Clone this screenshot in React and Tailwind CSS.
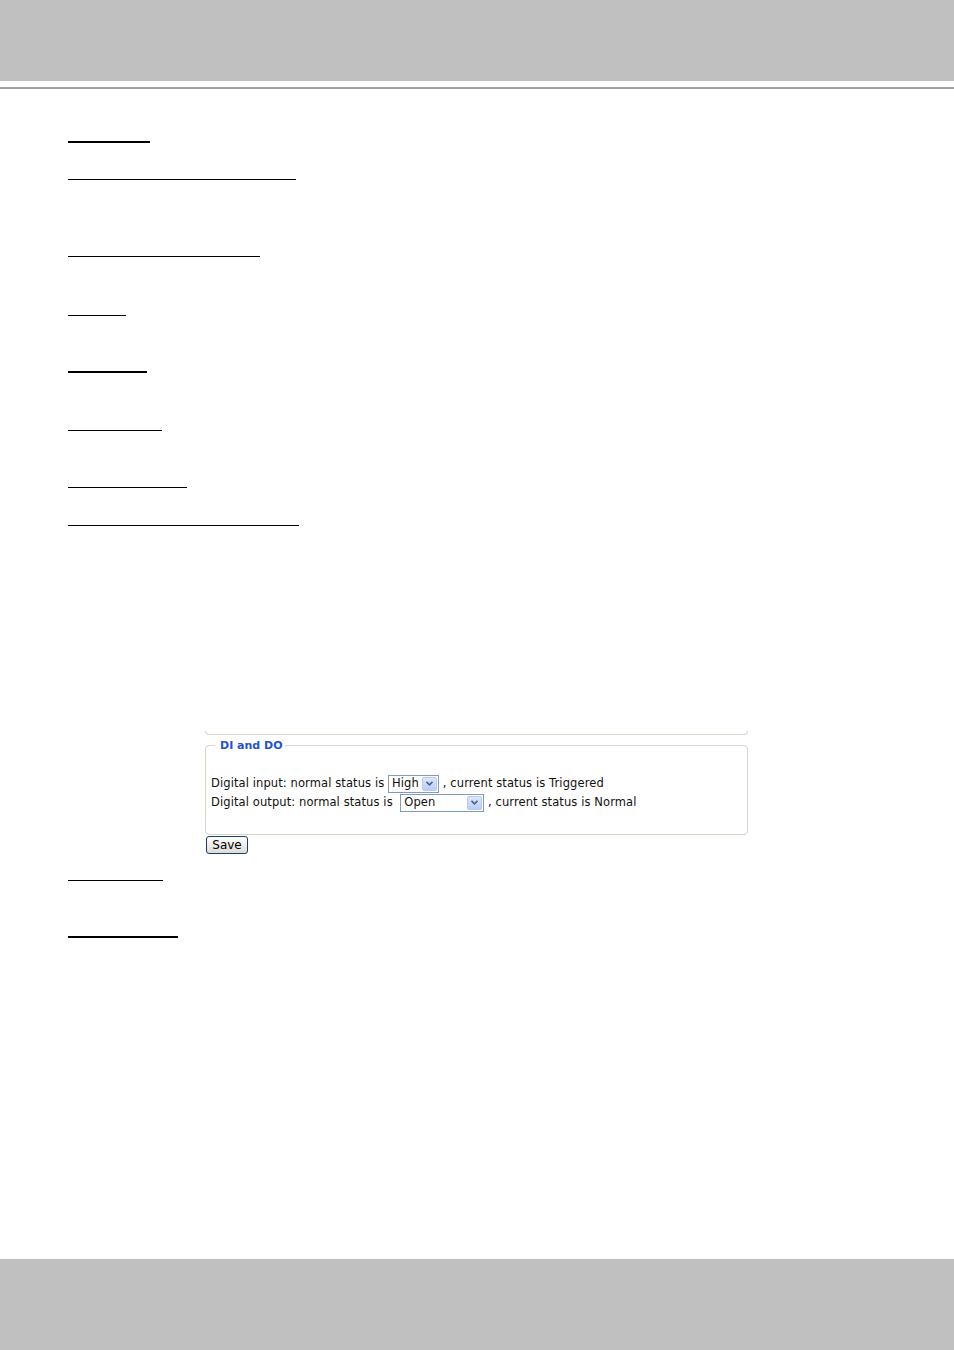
import React from 'react';

function Rule({ top, width, thick }) {
  return <div className={thick ? 'h-[2px] bg-black' : 'h-px bg-black'} style={{ marginTop: top, width }} />;
}

function FakeSelect({ value, width }) {
  return (
    <span
      className="inline-flex h-[18px] items-center justify-between border border-[#7f9db9] bg-white pl-[3px] pr-px"
      style={{ width }}
    >
      <span className="leading-none">{value}</span>
      <span className="flex h-[14px] w-[15px] items-center justify-center rounded-[2px] border border-[#b9c9ef] bg-linear-to-b from-[#dce6fd] to-[#b9cdfa]">
        <svg width="7" height="5" viewBox="0 0 7 5">
          <path d="M0.5 0.8 L3.5 3.8 L6.5 0.8" fill="none" stroke="#4d6185" strokeWidth="1.6" />
        </svg>
      </span>
    </span>
  );
}

export default function App() {
  return (
    <div className="flex h-[1350px] w-full flex-col bg-white font-['DejaVu_Sans',sans-serif]">
      {/* header band */}
      <div className="h-[81px] bg-[#bfc0bf]" />
      <div className="mt-[6px] h-[2px] bg-[#a0a0a0]" />

      <div className="flex-1 pl-[68px]">
        <Rule top={52} width={82} thick />
        <Rule top={36} width={228} />
        <Rule top={76} width={192} />
        <Rule top={58} width={58} />
        <Rule top={55} width={79} thick />
        <Rule top={57} width={94} />
        <Rule top={56} width={119} />
        <Rule top={37} width={231} />

        {/* settings panel */}
        <div className="ml-[137px] w-[543px]">
          <div className="mt-[205px] h-[4px] rounded-b-[4px] border-x border-b border-[#d5d5c8]" />
          <fieldset className="mt-[4px] rounded-[4px] border border-[#d5d5c8] px-[5px] pb-[22px] text-[11.5px] tracking-[0.1px] text-[#111]">
            <legend className="ml-[4px] pl-[5px] pr-[2px] text-[11px] font-bold leading-[13px] tracking-normal text-[#1d52d6]">
              DI and DO
            </legend>
            <div className="mt-[22px] flex h-[19px] items-center whitespace-pre">
              <span>Digital input: normal status is </span>
              <FakeSelect value="High" width={51} />
              <span> , current status is Triggered</span>
            </div>
            <div className="flex h-[19px] items-center whitespace-pre">
              <span>Digital output: normal status is  </span>
              <FakeSelect value="Open" width={84} />
              <span> , current status is Normal</span>
            </div>
          </fieldset>
          <button className="ml-px mt-px flex h-[18px] w-[42px] items-center justify-center rounded-[3px] border border-[#1c3f6e] bg-linear-to-b from-white to-[#dedcd2] text-[12px] leading-none text-black">
            Save
          </button>
        </div>

        <Rule top={26} width={95} />
        <Rule top={55} width={110} thick />
      </div>

      {/* footer band */}
      <div className="h-[91px] bg-[#bfc0bf]" />
    </div>
  );
}
